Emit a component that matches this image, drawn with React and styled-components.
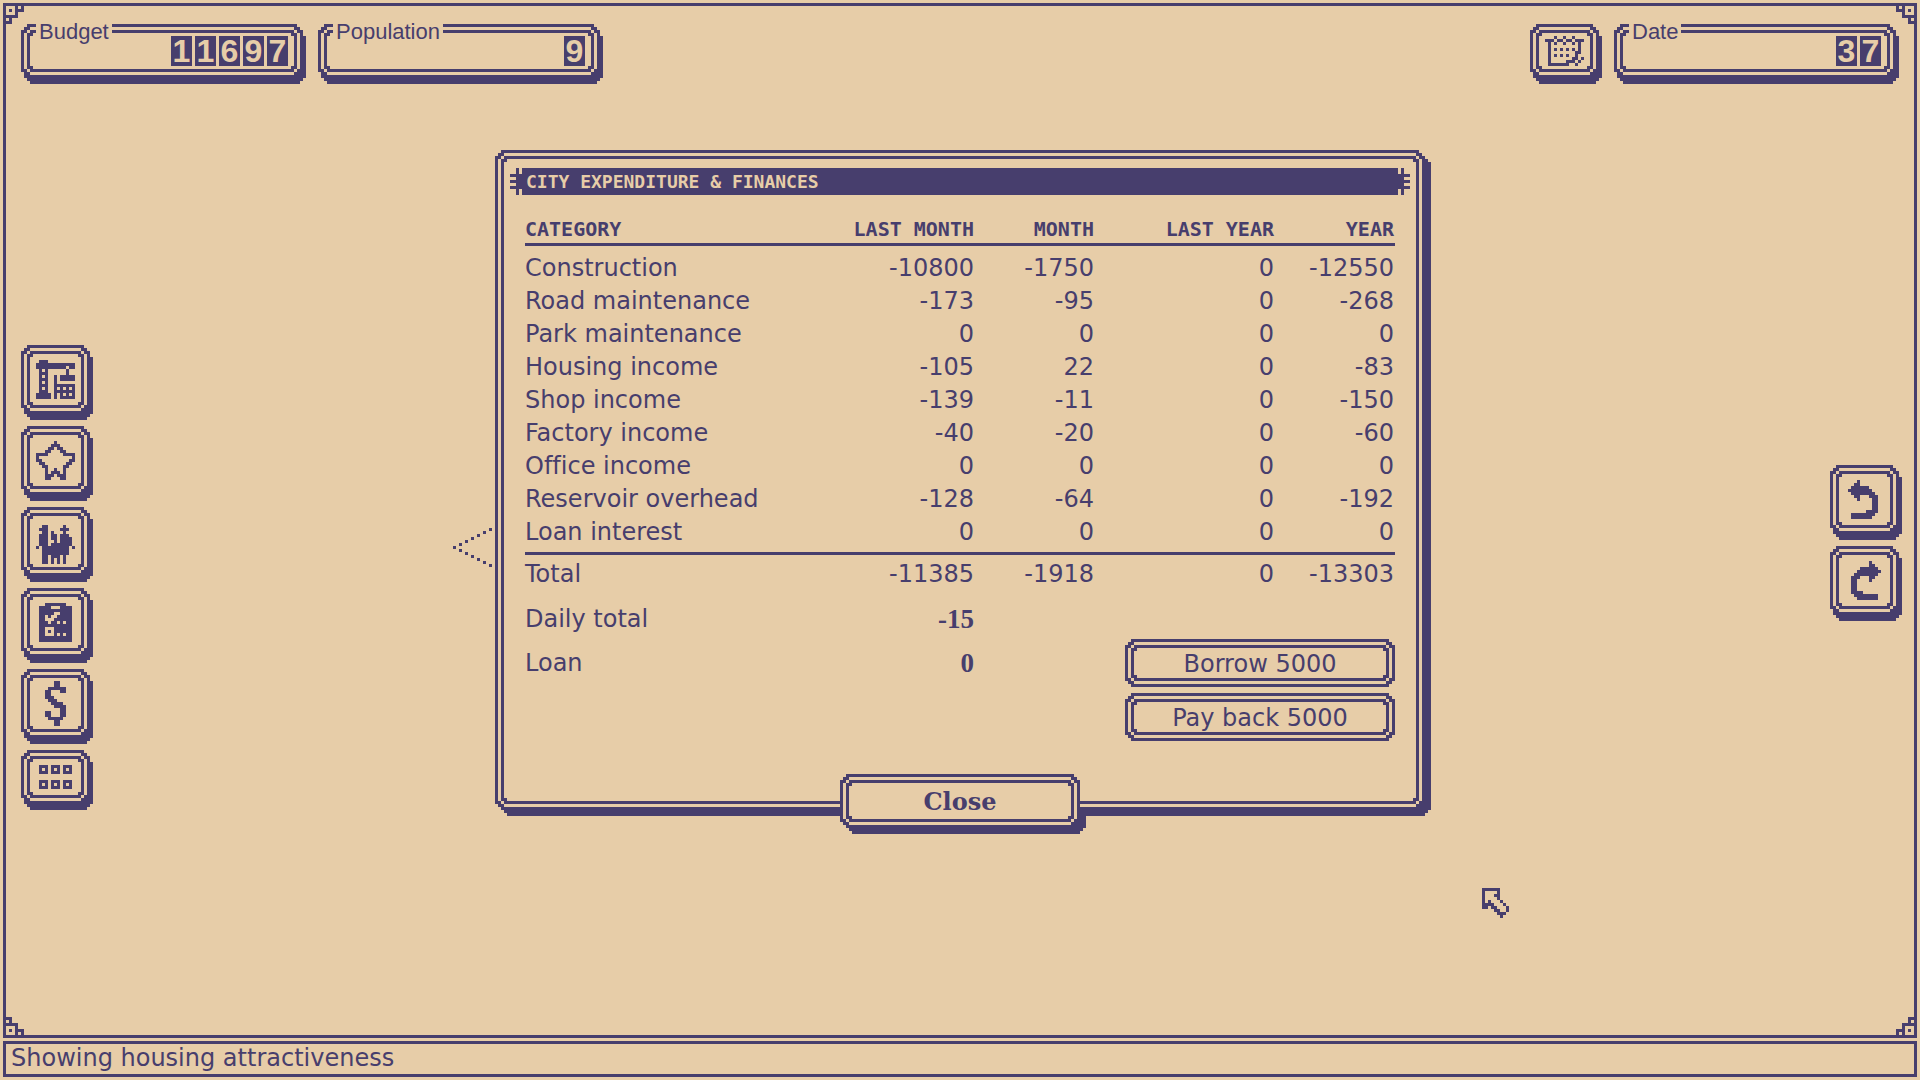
import React from "react"
import styled, { createGlobalStyle } from "styled-components"

const INK = "#473e6d"
const PAPER = "#e7cda8"
const CELL = 3

const bodyFont = `"DejaVu Sans", sans-serif`
const labelFont = `"Liberation Sans", sans-serif`
const capsFont = `"DejaVu Sans Mono", monospace`

/* ---------- pixel art helpers ---------- */

const toPath = (rows, match) =>
  rows
    .map((row, y) =>
      row
        .split("")
        .map((c, x) => (match(c) ? `M${x} ${y}h1v1h-1z` : ""))
        .join("")
    )
    .join("")

const frameTile = [
  "..XXXXXXX..",
  ".XXoooooXX.",
  "XXoXXXXXoXX",
  "XoXXoooXXoX",
  "XoXoooooXoX",
  "XoXoooooXoX",
  "XoXoooooXoX",
  "XoXXoooXXoX",
  "XXoXXXXXoXX",
  ".XXoooooXX.",
  "..XXXXXXX.."
]

// nine-slice frame, `from` is the tile row where the drop shadow begins
const frameImage = (dx, dy, from = 0) => {
  const shadowRows = frameTile.map((row, y) => (y + dy < from ? "" : row))
  const w = 11 + dx
  const h = 11 + dy
  const svg =
    `<svg xmlns="http://www.w3.org/2000/svg" width="${w * CELL}" height="${h * CELL}" viewBox="0 0 ${w} ${h}" shape-rendering="crispEdges">` +
    `<path transform="translate(${dx} ${dy})" fill="${INK}" d="${toPath(shadowRows, c => c !== ".")}"/>` +
    `<path fill="${PAPER}" d="${toPath(frameTile, c => c === "o")}"/>` +
    `<path fill="${INK}" d="${toPath(frameTile, c => c === "X")}"/></svg>`
  return `url("data:image/svg+xml,${encodeURIComponent(svg)}")`
}

const frame = (dx, dy, from) => `
  border: 3px solid transparent;
  border-image-source: ${frameImage(dx, dy, from)};
  border-image-slice: 15 ${15 + dx * CELL} ${15 + dy * CELL} 15 fill;
  border-image-width: 15px ${15 + dx * CELL}px ${15 + dy * CELL}px 15px;
`

const Svg = styled.svg`
  display: block;
  flex: none;
  fill: currentColor;
`

const Pixels = ({ rows, ...rest }) => {
  const width = Math.max(...rows.map(r => r.length))
  return (
    <Svg
      width={width * CELL}
      height={rows.length * CELL}
      viewBox={`0 0 ${width} ${rows.length}`}
      shapeRendering="crispEdges"
      aria-hidden="true"
      {...rest}
    >
      <path d={toPath(rows, c => c === "X")} />
    </Svg>
  )
}

const flip = rows => rows.map(r => r.split("").reverse().join(""))

/* ---------- icons ---------- */

const crane = [
  ".XXX.........",
  "XXXXXXXXXXXXX",
  "XXXXXXXXXX.XX",
  ".X.X......X..",
  ".XXX......X..",
  ".X.X..X.XXXXX",
  ".XXX..X.XXXXX",
  ".X.X..X......",
  ".XXX..XXXXXXX",
  ".X.X..X.X.X.X",
  ".XXX..XXXXXXX",
  "XXXXX.X.X.X.X",
  "XXXXX.X.XXXXX"
]

const star = [
  "......X......",
  ".....XXX.....",
  "....XX.XX....",
  "...XX...XX...",
  "XXXX.....XXXX",
  "X...........X",
  "XX.........XX",
  ".XX.......XX.",
  "..XX.....XX..",
  "...X..X..X...",
  "...X.XXX.X...",
  "...XXX.XXX...",
  "...XX...XX..."
]

const people = [
  ".............",
  ".............",
  "..XX.....X...",
  ".XXX....XXX..",
  "..XX.X...X...",
  ".XXX.XX.XXX..",
  ".XXX.XX.XXXX.",
  ".XXX..X.XXXX.",
  ".XXX.XXXXXXX.",
  "X.XXXXXXXXX.X",
  "..XXXXXXXXX..",
  "..XXXXXXXXX..",
  "..XX.XXX.X...",
  "..XX.X.X.X...",
  "..XX.X.X.X..."
]

const clipboard = [
  "..XXXXXXX..",
  "XXXX...XXXX",
  "XXXXXXXXXXX",
  "XXXXX..XXXX",
  "XX.X..XXXXX",
  "XX...XXXXXX",
  "XXX.XX.X.XX",
  "XXXXXXXXXXX",
  "XX...XXXXXX",
  "XX.X.XXXXXX",
  "XX...X.X.XX",
  "XXXXXXXXXXX",
  "XXXXXXXXXXX"
]

const dollar = [
  "...XX..",
  "...XX..",
  ".XXXXXX",
  "XX...XX",
  "XX.....",
  "XXX....",
  ".XXX...",
  "..XXXX.",
  "...XXXX",
  ".....XX",
  "XX...XX",
  "XX...XX",
  ".XXXXX.",
  "...XX..",
  "...XX.."
]

const squares = [
  "XXX.XXX.XXX",
  "X.X.X.X.X.X",
  "XXX.XXX.XXX",
  "...........",
  "...........",
  "XXX.XXX.XXX",
  "X.X.X.X.X.X",
  "XXX.XXX.XXX"
]

const undo = [
  "...X.......",
  "..XX.......",
  ".XXXXXX....",
  "XXXXXXXX...",
  ".XXXXXXXX..",
  "..XX...XXX.",
  "...X....XX.",
  "........XX.",
  "........XX.",
  "........XX.",
  "......XXXX.",
  ".XXXXXXXX..",
  ".XXXXXXX..."
]

const calendar = [
  "...X..X..X...",
  "XXX.XX.XX.XXX",
  ".X.X..X..X.X.",
  ".X.........X.",
  ".X.X.X.X.X.X.",
  ".X........XX.",
  ".X.X.X.X..X..",
  ".X.......XX.X",
  ".X.....XXX.X.",
  ".XXXXXXX..X.."
]

const corner = ["...X.X", ".X.XXX", "...X..", "XXXX..", ".X....", "XX...."]

const titleCap = [
  "..X.",
  "..X.",
  "XXXX",
  "..XX",
  "XXXX",
  "..XX",
  "XXXX",
  "..X.",
  "..X."
]

const pointer = [
  "............X",
  "..........X..",
  "........X....",
  "......X......",
  "....X........",
  "..X..........",
  "X............",
  "..X..........",
  "....X........",
  "......X......",
  "........X....",
  "..........X..",
  "............X"
]

const arrow = [
  "XXXXXX...",
  "X....X...",
  "X...XX...",
  "X....X...",
  "X.X...X..",
  "XXXX...X.",
  "XX.XX...X",
  "....XX..X",
  ".....XXX.",
  "......X.."
]

/* ---------- styles ---------- */

const GlobalStyle = createGlobalStyle`
  * {
    box-sizing: border-box;
  }
  body {
    margin: 0;
    background: ${PAPER};
    color: ${INK};
    font-family: ${bodyFont};
    font-size: 24px;
    font-variant-ligatures: none;
  }
  button {
    margin: 0;
    padding: 0;
    background: none;
    color: inherit;
    font: inherit;
    cursor: pointer;
  }
`

const Screen = styled.div`
  position: relative;
  display: flex;
  flex-direction: column;
  gap: 3px;
  min-height: 100vh;
  padding: 3px;
`

const City = styled.main`
  position: relative;
  flex: 1;
  display: flex;
  flex-direction: column;
  border: 3px solid ${INK};
`

const Corner = styled(Pixels)`
  position: absolute;
  ${({ $v }) => $v}: 0;
  ${({ $h }) => $h}: 0;
  transform: scale(
    ${({ $h }) => ($h === "right" ? -1 : 1)},
    ${({ $v }) => ($v === "bottom" ? -1 : 1)}
  );
`

const Hud = styled.header`
  display: flex;
  gap: 12px;
  padding: 18px 15px 0;
`

const Spacer = styled.div`
  flex: 1;
`

const Counter = styled.div`
  ${frame(1, 2)}
  position: relative;
  display: flex;
  justify-content: flex-end;
  gap: 3px;
  width: 285px;
  height: 60px;
  padding: 9px 15px 0 0;
`

const Legend = styled.span`
  position: absolute;
  top: -9px;
  left: 12px;
  padding: 0 3px;
  background: ${PAPER};
  font-family: ${labelFont};
  font-size: 22px;
  line-height: 27px;
`

const Digit = styled.span`
  width: 21px;
  height: 30px;
  background: ${INK};
  color: ${PAPER};
  font-family: ${labelFont};
  font-size: 32px;
  font-weight: 700;
  line-height: 30px;
  text-align: center;
`

const IconButton = styled.button`
  ${frame(1, 2)}
  display: flex;
  align-items: center;
  justify-content: center;
  width: 72px;
  height: ${({ $short }) => ($short ? 60 : 75)}px;
  padding: 0 3px 6px 0;
`

const Body = styled.div`
  flex: 1;
  display: grid;
  grid-template-columns: 1fr auto 1fr;
  padding: 0 12px 0 15px;
`

const Tools = styled.nav`
  display: flex;
  flex-direction: column;
  justify-content: center;
  gap: 6px;
  padding-top: 36px;
`

const History = styled(Tools)`
  align-items: flex-end;
  padding: 0 0 33px;
`

const Dialog = styled.section`
  ${frame(2, 2)}
  position: relative;
  align-self: start;
  display: flex;
  flex-direction: column;
  width: 936px;
  margin: 66px 0 18px 3px;
  padding: 15px 18px 0 12px;
`

const Pointer = styled(Pixels)`
  position: absolute;
  top: 375px;
  left: -45px;
`

const TitleBar = styled.div`
  display: flex;
`

const Title = styled.h1`
  flex: 1;
  margin: 0;
  padding: 0 4px;
  background: ${INK};
  color: ${PAPER};
  font-family: ${capsFont};
  font-size: 18px;
  font-weight: 700;
  line-height: 27px;
  text-transform: uppercase;
`

const Finances = styled.table`
  width: 870px;
  margin: 21px 15px 0;
  border-collapse: separate;
  border-spacing: 0;
  table-layout: fixed;
  line-height: 33px;
`

const Col = styled.col`
  width: ${({ $w }) => $w}px;
`

const HeadCell = styled.th`
  padding: 0 1px 0 0;
  border-bottom: 3px solid ${INK};
  font-family: ${capsFont};
  font-size: 20px;
  font-weight: 700;
  line-height: 27px;
  text-align: ${({ $left }) => ($left ? "left" : "right")};
  text-transform: uppercase;
`

const Name = styled.th`
  padding: 0;
  font-weight: 400;
  text-align: left;
`

const Amount = styled.td`
  padding: 0 1px 0 0;
  text-align: right;
`

const Rows = styled.tbody`
  tr:first-child > * {
    padding-top: 6px;
  }
  tr:last-child > * {
    padding-bottom: 3px;
  }
`

const Totals = styled.tfoot`
  tr > * {
    padding-top: 3px;
    border-top: 3px solid ${INK};
  }
`

const Summary = styled.div`
  display: grid;
  grid-template-columns: 300px 150px 1fr;
  grid-template-rows: 36px 48px 54px;
  margin: 12px 15px 33px;
  line-height: 33px;
`

const Line = styled.span`
  grid-column: 1;
  align-self: ${({ $mid }) => ($mid ? "center" : "start")};
`

const Strong = styled.output`
  grid-column: 2;
  align-self: ${({ $mid }) => ($mid ? "center" : "start")};
  padding-right: 1px;
  font-family: "Liberation Serif", serif;
  font-size: 27px;
  font-weight: 700;
  text-align: right;
`

const Actions = styled.div`
  grid-area: 2 / 3 / 4 / 4;
  justify-self: end;
  display: flex;
  flex-direction: column;
  gap: 6px;
  width: 270px;
`

const LoanButton = styled.button`
  ${frame(0, 0)}
  height: 48px;
  padding-top: 2px;
`

const CloseButton = styled.button`
  ${frame(2, 2, 6)}
  align-self: center;
  width: 246px;
  height: 60px;
  margin: 0 -6px -21px 0;
  padding: 0 6px 6px 0;
  font-family: "DejaVu Serif", serif;
  font-weight: 700;
`

const Status = styled.footer`
  padding: 2px 5px 4px;
  border: 3px solid ${INK};
  line-height: 24px;
`

const Cursor = styled(Pixels)`
  position: absolute;
  top: 888px;
  left: 1482px;
`

/* ---------- data ---------- */

const tools = [
  { label: "Build", rows: crane },
  { label: "Attractiveness", rows: star },
  { label: "Citizens", rows: people },
  { label: "Tasks", rows: clipboard },
  { label: "Finances", rows: dollar },
  { label: "Menu", rows: squares, short: true }
]

const columns = ["Last month", "Month", "Last year", "Year"]

const entries = [
  ["Construction", -10800, -1750, 0, -12550],
  ["Road maintenance", -173, -95, 0, -268],
  ["Park maintenance", 0, 0, 0, 0],
  ["Housing income", -105, 22, 0, -83],
  ["Shop income", -139, -11, 0, -150],
  ["Factory income", -40, -20, 0, -60],
  ["Office income", 0, 0, 0, 0],
  ["Reservoir overhead", -128, -64, 0, -192],
  ["Loan interest", 0, 0, 0, 0]
]

const total = ["Total", -11385, -1918, 0, -13303]

/* ---------- components ---------- */

const Stat = ({ label, value }) => (
  <Counter>
    <Legend>{label}</Legend>
    {String(value)
      .split("")
      .map((d, i) => (
        <Digit key={i}>{d}</Digit>
      ))}
  </Counter>
)

const Tool = ({ label, rows, short }) => (
  <IconButton type="button" aria-label={label} $short={short}>
    <Pixels rows={rows} />
  </IconButton>
)

const Entry = ({ entry: [name, ...amounts] }) => (
  <tr>
    <Name scope="row">{name}</Name>
    {amounts.map((amount, i) => (
      <Amount key={i}>{amount}</Amount>
    ))}
  </tr>
)

const FinanceDialog = () => (
  <Dialog role="dialog" aria-labelledby="finance-title">
    <Pointer rows={pointer} />
    <TitleBar>
      <Pixels rows={titleCap} />
      <Title id="finance-title">City expenditure &amp; finances</Title>
      <Pixels rows={flip(titleCap)} />
    </TitleBar>
    <Finances>
      <colgroup>
        <Col $w={300} />
        <Col $w={150} />
        <Col $w={120} />
        <Col $w={180} />
        <Col $w={120} />
      </colgroup>
      <thead>
        <tr>
          <HeadCell scope="col" $left>
            Category
          </HeadCell>
          {columns.map(c => (
            <HeadCell key={c} scope="col">
              {c}
            </HeadCell>
          ))}
        </tr>
      </thead>
      <Rows>
        {entries.map(e => (
          <Entry key={e[0]} entry={e} />
        ))}
      </Rows>
      <Totals>
        <Entry entry={total} />
      </Totals>
    </Finances>
    <Summary>
      <Line>Daily total</Line>
      <Strong>-15</Strong>
      <Line $mid>Loan</Line>
      <Strong $mid>0</Strong>
      <Actions>
        <LoanButton type="button">Borrow 5000</LoanButton>
        <LoanButton type="button">Pay back 5000</LoanButton>
      </Actions>
    </Summary>
    <CloseButton type="button">Close</CloseButton>
  </Dialog>
)

const App = () => (
  <Screen>
    <GlobalStyle />
    <City>
      <Corner rows={corner} $v="top" $h="left" />
      <Corner rows={corner} $v="top" $h="right" />
      <Corner rows={corner} $v="bottom" $h="left" />
      <Corner rows={corner} $v="bottom" $h="right" />
      <Hud>
        <Stat label="Budget" value={11697} />
        <Stat label="Population" value={9} />
        <Spacer />
        <Tool label="Calendar" rows={calendar} short />
        <Stat label="Date" value={37} />
      </Hud>
      <Body>
        <Tools>
          {tools.map(t => (
            <Tool key={t.label} {...t} />
          ))}
        </Tools>
        <FinanceDialog />
        <History>
          <Tool label="Undo" rows={undo} />
          <Tool label="Redo" rows={flip(undo)} />
        </History>
      </Body>
    </City>
    <Status>Showing housing attractiveness</Status>
    <Cursor rows={arrow} />
  </Screen>
)

export default App
